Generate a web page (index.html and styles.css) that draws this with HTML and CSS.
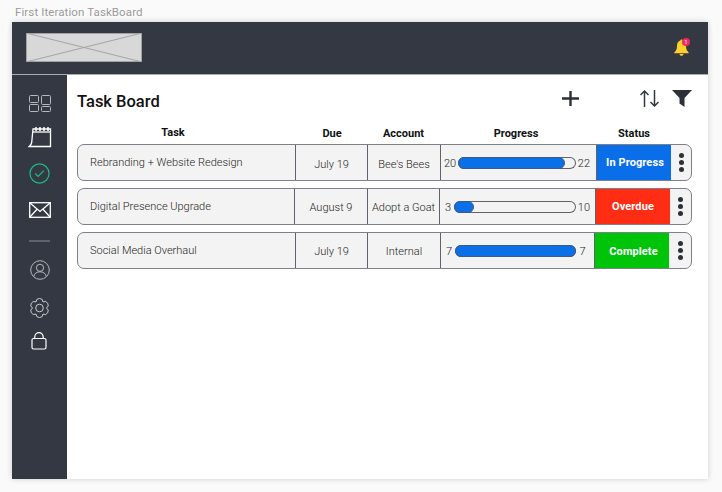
FILE: index.html
```html
<!DOCTYPE html>
<html lang="en">

<head>
    <meta charset="UTF-8">
    <meta name="viewport" content="width=device-width, initial-scale=1.0">
    <title>First Iteration TaskBoard</title>
    <link rel="stylesheet" href="styles.css">
</head>

<body>
    <div class="frame-title">First Iteration TaskBoard</div>
    <div class="frame">
        <header class="topbar">
            <svg class="logo" width="116" height="29" viewBox="0 0 116 29">
                <rect x="0.5" y="0.5" width="115" height="28" fill="#d8d8d8" stroke="#a3a3a3" />
                <path d="M0 0L116 29M116 0L0 29" stroke="#a3a3a3" fill="none" />
            </svg>
            <svg class="bell" width="20" height="20" viewBox="0 0 20 20">
                <path d="M8.5 2.5c-.3-1.2 2.3-1.2 2 0 2.6.8 3.5 3 3.5 5.5 0 3 .8 4.7 2.5 6.200.5.5.2 1.100-.4 1.100H2.900c-.6 0-.9-.6-.4-1.100C4.200 12.700 5 11 5 8c0-2.500.9-4.700 3.500-5.500z" fill="#ffd02a" />
                <path d="M7.500 16h4c0 2.400-4 2.400-4 0z" fill="#ffd02a" />
                <circle cx="14" cy="4" r="4" fill="#f0285f" />
                <text x="14" y="6" class="bell-count">1</text>
            </svg>
        </header>
        <div class="app">
            <nav class="sidebar">
                <svg class="nav-icon" width="22" height="17" viewBox="0 0 22 17" fill="none" stroke="#b5b8bd">
                    <rect x="0.5" y="0.5" width="9" height="7" rx="1" />
                    <rect x="0.5" y="9.5" width="9" height="7" rx="1" />
                    <rect x="12.5" y="0.5" width="9" height="9" rx="1" />
                    <rect x="12.5" y="11.5" width="9" height="5" rx="1" />
                </svg>
                <svg class="nav-icon" width="24" height="21" viewBox="0 0 24 21" fill="none" stroke="#fff" stroke-width="1.3">
                    <path d="M5 2H22.5V19.5H1.2C2.800 18.500 3.400 17 3.700 15.500z" />
                    <path d="M4.800 5H22.500" />
                    <path d="M8 0V4M12 0V4M16 0V4M20 0V4" stroke-width="1.5" />
                </svg>
                <svg class="nav-icon icon-check" width="21" height="21" viewBox="0 0 22 22" fill="none" stroke="#1db884" stroke-width="1.3">
                    <circle cx="11" cy="11" r="10" />
                    <path d="M6.500 11l3 3 6-6" />
                </svg>
                <svg class="nav-icon icon-mail" width="22" height="16" viewBox="0 0 22 16" fill="none" stroke="#fff" stroke-width="1.3">
                    <rect x="0.7" y="0.7" width="20.6" height="14.6" />
                    <path d="M0.700 0.700L11 9.500 21.300 0.700M0.700 15.300L8 7.200M21.300 15.300L14 7.200" />
                </svg>
                <div class="nav-divider"></div>
                <svg class="nav-icon icon-user" width="20" height="20" viewBox="0 0 20 20" fill="none" stroke="#b5b8bd">
                    <circle cx="10" cy="10" r="9.3" />
                    <circle cx="10" cy="7.8" r="3.6" />
                    <path d="M3.800 16.500c.5-3.200 3-4.700 6.200-4.700s5.700 1.500 6.200 4.700" />
                </svg>
                <svg class="nav-icon icon-gear" width="19" height="20" viewBox="0 0 19 20" fill="none" stroke="#c9ccd1">
                    <path d="M6 3.940A3.500 3.500 0 0 1 13 3.940A3.500 3.500 0 0 1 16.500 10A3.500 3.500 0 0 1 13 16.060A3.500 3.500 0 0 1 6 16.060A3.500 3.500 0 0 1 2.500 10A3.500 3.500 0 0 1 6 3.940z" />
                    <circle cx="9.5" cy="10" r="3.8" />
                </svg>
                <svg class="nav-icon icon-lock" width="16" height="18" viewBox="0 0 16 18" fill="none" stroke="#fff" stroke-width="1.2">
                    <rect x="1" y="6.5" width="14" height="10.5" rx="1.5" />
                    <path d="M3.800 6.500V4.800a4.200 4.200 0 0 1 8.400 0v1.700" />
                </svg>
            </nav>
            <main class="board">
                <div class="board-head">
                    <h1>Task Board</h1>
                    <div class="board-tools">
                        <svg class="tool-add" width="17" height="15" viewBox="0 0 17 15">
                            <path d="M0 7.500h17M8.500 0v15" stroke="#2c3038" stroke-width="2.4" />
                        </svg>
                        <svg class="tool-sort" width="19" height="17" viewBox="0 0 19 17" fill="none" stroke="#333842" stroke-width="1.5">
                            <path d="M4.500 17V1M.5 5l4-4 4 4M14.500 0v16M10.500 12l4 4 4-4" />
                        </svg>
                        <svg class="tool-filter" width="20" height="17" viewBox="0 0 20 17">
                            <path d="M0 0h20l-7.500 8v9l-5-3.500V8z" fill="#2c3038" />
                        </svg>
                    </div>
                </div>

                <div class="columns">
                    <div class="col-task">Task</div>
                    <div>Due</div>
                    <div>Account</div>
                    <div>Progress</div>
                    <div>Status</div>
                </div>

                <div class="task-row row-one">
                    <div class="cell task-name">Rebranding + Website Redesign</div>
                    <div class="cell">July 19</div>
                    <div class="cell">Bee's Bees</div>
                    <div class="cell progress">
                        <span class="num">20</span>
                        <div class="bar"><div class="bar-fill" style="width: 91%"></div></div>
                        <span class="num num-end">22</span>
                    </div>
                    <div class="status status-blue">In Progress</div>
                    <div class="more"><i></i><i></i><i></i></div>
                </div>

                <div class="task-row row-two">
                    <div class="cell task-name">Digital Presence Upgrade</div>
                    <div class="cell">August 9</div>
                    <div class="cell">Adopt a Goat</div>
                    <div class="cell progress">
                        <span class="num">3</span>
                        <div class="bar"><div class="bar-fill" style="width: 16%"></div></div>
                        <span class="num num-end">10</span>
                    </div>
                    <div class="status status-red">Overdue</div>
                    <div class="more"><i></i><i></i><i></i></div>
                </div>

                <div class="task-row row-three">
                    <div class="cell task-name">Social Media Overhaul</div>
                    <div class="cell">July 19</div>
                    <div class="cell">Internal</div>
                    <div class="cell progress">
                        <span class="num">7</span>
                        <div class="bar"><div class="bar-fill" style="width: 100%"></div></div>
                        <span class="num num-end">7</span>
                    </div>
                    <div class="status status-green">Complete</div>
                    <div class="more"><i></i><i></i><i></i></div>
                </div>
            </main>
        </div>
    </div>
</body>

</html>
```

FILE: styles.css
```css
html,
body {
    height: 100%;
}

body {
    font-family: Roboto, "Liberation Sans", sans-serif;
    background-color: #fafafa;
    margin: 0;
    padding: 0 14px 0 12px;
    box-sizing: border-box;
    overflow: hidden;
    color: #1c1e22;
}

.frame-title {
    height: 22px;
    padding: 6px 0 0 3px;
    box-sizing: border-box;
    font-size: 11.5px;
    line-height: 13px;
    letter-spacing: 0.1px;
    color: #9a9a9a;
}

.frame {
    height: 457px;
    display: flex;
    flex-direction: column;
    box-shadow: 0 0 6px rgba(0, 0, 0, 0.18);
}

.topbar {
    height: 53px;
    flex: none;
    display: flex;
    align-items: center;
    justify-content: space-between;
    padding: 0 16px 0 14px;
    background: #333842;
    border-bottom: 1px solid #a9abb0;
    box-sizing: border-box;
}

.logo {
    margin-top: -1px;
}

.bell-count {
    font-size: 6px;
    fill: #fff;
    text-anchor: middle;
}

.app {
    flex: 1;
    display: flex;
    min-height: 0;
}

.sidebar {
    width: 55px;
    flex: none;
    display: flex;
    flex-direction: column;
    align-items: center;
    padding-top: 20px;
    background: #333842;
}

.nav-icon {
    display: block;
    margin-bottom: 15px;
}

.nav-icon.icon-check {
    margin-bottom: 18px;
}

.nav-icon.icon-mail {
    margin-bottom: 22px;
}

.nav-icon.icon-user {
    margin-bottom: 18px;
}

.nav-icon.icon-gear {
    margin-bottom: 14px;
}

.nav-icon.icon-lock {
    margin-right: 2px;
}

.nav-divider {
    width: 21px;
    height: 2px;
    margin-bottom: 18px;
    background: #5d626b;
}

.board {
    flex: 1;
    padding: 0 16px 0 10px;
    background: #fff;
}

.board-head {
    height: 50px;
    display: flex;
    align-items: center;
    justify-content: space-between;
}

h1 {
    margin: 2px 0 0;
    font-size: 16.5px;
    font-weight: 500;
    color: #111;
}

.board-tools {
    display: flex;
    align-items: center;
    margin-bottom: 4px;
}

.tool-add {
    margin-right: 61px;
}

.tool-sort {
    margin-right: 13px;
}

.columns {
    height: 19px;
    display: grid;
    grid-template-columns: 218px 74px 69px 156px 80px;
    font-size: 11px;
    font-weight: 700;
    line-height: 17px;
    text-align: center;
    color: #111;
}

.col-task {
    padding-right: 26px;
    line-height: 15px;
}

.task-row {
    height: 37px;
    margin-bottom: 7px;
    display: grid;
    border: 1px solid #7d8087;
    border-radius: 7px;
    background: #f3f3f3;
    box-sizing: border-box;
    overflow: hidden;
}

.row-one {
    grid-template-columns: 218px 72px 73px 156px 74px 20px;
}

.row-two {
    grid-template-columns: 217px 73px 72px 156px 74px 21px;
}

.row-three {
    grid-template-columns: 218px 72px 73px 154px 74px 22px;
}

.cell {
    display: flex;
    align-items: center;
    justify-content: center;
    border-right: 1px solid #5f626a;
    font-size: 11px;
    font-weight: 300;
    padding-top: 2px;
    box-sizing: border-box;
    white-space: nowrap;
}

.row-one .cell {
    padding-top: 4px;
}

.task-row .cell.task-name {
    justify-content: flex-start;
    padding: 0 0 1px 12px;
}

.task-row .cell.progress {
    padding: 1px 5px 0;
    gap: 3px;
}

.row-one .cell.progress {
    padding: 1px 6px 0 3px;
    gap: 2px;
}

.num {
    font-size: 11px;
    font-weight: 300;
}

.task-row .num-end {
    width: 14px;
    margin-left: -3px;
    text-align: right;
}

.row-one .num-end {
    margin-left: -2px;
}

.task-row.row-three .num-end {
    width: 13px;
    text-align: center;
}

.bar {
    flex: 1;
    height: 12px;
    border-radius: 6px;
    box-shadow: inset 0 0 0 1px #5f626a;
}

.bar-fill {
    height: 12px;
    border: 1px solid #3d5a85;
    border-radius: 6px;
    background: #0b6fe8;
    box-sizing: border-box;
}

.status {
    display: flex;
    align-items: center;
    justify-content: center;
    font-size: 11px;
    font-weight: 700;
    letter-spacing: 0.1px;
    color: #fff;
    padding-bottom: 1px;
}

.status-blue {
    padding-left: 2px;
    background: #0a6ee9;
}

.status-red {
    background: #ff2d14;
}

.status-green {
    padding: 1px 0 0 3px;
    background: #00c40a;
}

.more {
    display: flex;
    flex-direction: column;
    align-items: center;
    justify-content: center;
    gap: 2px;
}

.more i {
    width: 5px;
    height: 5px;
    border-radius: 50%;
    background: #2c3038;
}
```
